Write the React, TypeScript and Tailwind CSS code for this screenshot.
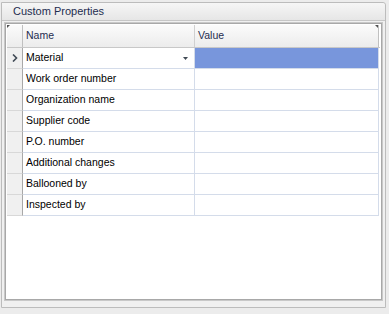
import React from "react";

const rows = [
  "Material",
  "Work order number",
  "Organization name",
  "Supplier code",
  "P.O. number",
  "Additional changes",
  "Ballooned by",
  "Inspected by",
];

export default function App() {
  return (
    <div
      className="w-[389px] h-[314px] bg-[#ececec] pt-[2px] pl-[1px] overflow-hidden"
      style={{ fontFamily: '"Liberation Sans", Arial, sans-serif' }}
    >
      <div className="w-[385px] h-[306px] border border-[#bcbcbc] rounded-tr-[3px] bg-[#f0f0f0] flex flex-col">
        <div className="h-[18px] shrink-0 bg-gradient-to-b from-[#f6f6f6] to-[#e6e6e6] border-b border-[#c6c6c6] rounded-tr-[3px] flex items-center pl-[11px] text-[11px] text-[#1e2d4f]">
          Custom Properties
        </div>
        <div className="flex-1 pl-[2px] pr-[2px] pt-[1px] pb-[6px]">
          <div className="w-full h-full border border-[#c8c8c8]">
            <div className="w-full h-full border border-[#a8a8a8] bg-white p-[1px]">
              <div className="w-full h-full bg-white">
                {/* header row */}
                <div className="flex h-[23px] border-b border-[#c8c8c8] text-[10.5px] text-[#1e2d4f] relative">
                  <div className="w-[16px] shrink-0 bg-gradient-to-b from-[#fbfbfb] to-[#ececec] border-r border-[#c0c0c0] relative">
                    <svg className="absolute left-0 top-0" width="3" height="3" viewBox="0 0 3 3">
                      <path d="M0 0 H3 L0 3 Z" fill="#505050" />
                    </svg>
                  </div>
                  <div className="w-[172px] shrink-0 bg-gradient-to-b from-[#fbfbfb] to-[#ececec] border-r border-[#d0d0d0] flex items-center pl-[3px]">
                    Name
                  </div>
                  <div className="w-[184px] shrink-0 bg-gradient-to-b from-[#fbfbfb] to-[#ececec] border-r border-[#c0c0c0] flex items-center pl-[3px] relative">
                    Value
                    <svg className="absolute right-0 top-0" width="3" height="3" viewBox="0 0 3 3">
                      <path d="M0 0 H3 V3 Z" fill="#505050" />
                    </svg>
                  </div>
                </div>
                {rows.map((r, i) => (
                  <div key={r} className="flex h-[21px] text-[10.5px] text-black">
                    <div className="w-[16px] shrink-0 bg-[#f0f0f0] border-r border-[#a8a8a8] border-b border-b-[#d8d8d8] flex items-center justify-center">
                      {i === 0 && (
                        <svg width="6" height="8" viewBox="0 0 6 8">
                          <path d="M1 0.5 L4.5 4 L1 7.5" fill="none" stroke="#404a55" strokeWidth="1.6" />
                        </svg>
                      )}
                    </div>
                    <div className="w-[172px] shrink-0 border-r border-b border-[#d4dcea] flex items-center pl-[3px] relative">
                      {r}
                      {i === 0 && (
                        <svg className="absolute right-[6px] top-[9px]" width="5" height="3" viewBox="0 0 5 3">
                          <path d="M0 0 H5 L2.5 3 Z" fill="#404a55" />
                        </svg>
                      )}
                    </div>
                    <div
                      className={
                        "w-[184px] shrink-0 border-r border-b border-[#d4dcea] " +
                        (i === 0 ? "bg-[#7896dc]" : "")
                      }
                    />
                  </div>
                ))}
              </div>
            </div>
          </div>
        </div>
      </div>
    </div>
  );
}
